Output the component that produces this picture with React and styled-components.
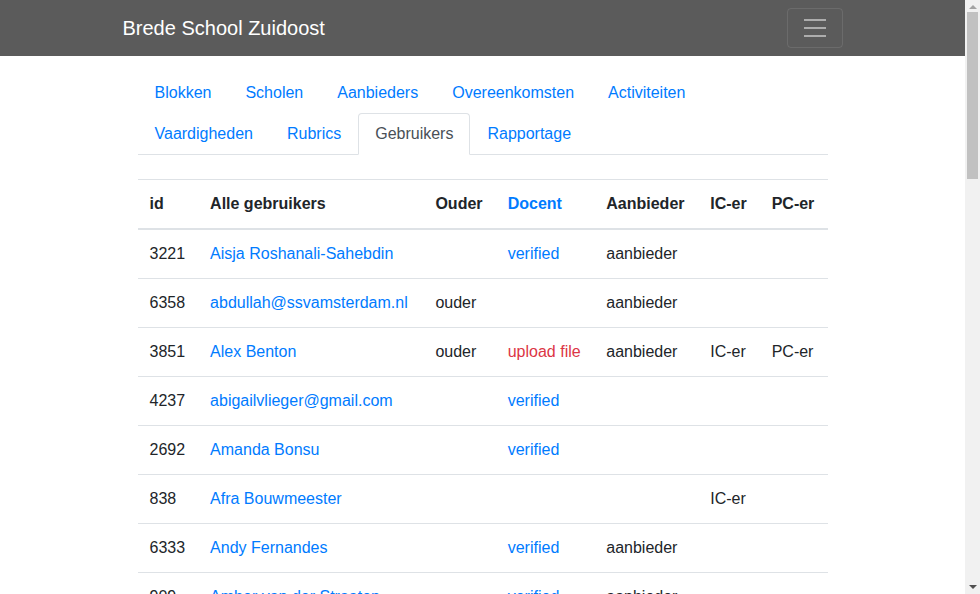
import styled, { createGlobalStyle } from "styled-components";

const GlobalStyle = createGlobalStyle`
  *, *::before, *::after { box-sizing: border-box; }
  body {
    margin: 0;
    font-family: "Liberation Sans", Arial, sans-serif;
    font-size: 16px;
    line-height: 1.5;
    color: #212529;
    background: #fff;
  }
`;

const tabs = [
  "Blokken",
  "Scholen",
  "Aanbieders",
  "Overeenkomsten",
  "Activiteiten",
  "Vaardigheden",
  "Rubrics",
  "Gebruikers",
  "Rapportage",
];

const users = [
  { id: 3221, name: "Aisja Roshanali-Sahebdin", docent: "verified", aanbieder: true },
  { id: 6358, name: "abdullah@ssvamsterdam.nl", ouder: true, aanbieder: true },
  { id: 3851, name: "Alex Benton", ouder: true, docent: "upload", aanbieder: true, ic: true, pc: true },
  { id: 4237, name: "abigailvlieger@gmail.com", docent: "verified" },
  { id: 2692, name: "Amanda Bonsu", docent: "verified" },
  { id: 838, name: "Afra Bouwmeester", ic: true },
  { id: 6333, name: "Andy Fernandes", docent: "verified", aanbieder: true },
  { id: 909, name: "Amber van der Straaten", docent: "verified", aanbieder: true },
  { id: 4410, name: "Anouk de Vries", ouder: true },
  { id: 5127, name: "Anton Kuipers", docent: "verified" },
  { id: 1284, name: "Ayoub El Amrani", docent: "verified", aanbieder: true },
  { id: 3902, name: "Babette Jansen", ouder: true },
];

export default function App() {
  return (
    <Viewport>
      <GlobalStyle />
      <Page>
        <Navbar>
          <NavContainer>
            <Brand href="#">Brede School Zuidoost</Brand>
            <Toggler aria-label="Toggle navigation">
              <TogglerIcon viewBox="0 0 30 30">
                <path
                  d="M4 7h22M4 15h22M4 23h22"
                  stroke="rgba(255,255,255,0.5)"
                  strokeWidth="2"
                  strokeMiterlimit="10"
                />
              </TogglerIcon>
            </Toggler>
          </NavContainer>
        </Navbar>

        <Container>
          <NavTabs>
            {tabs.map((t) => (
              <NavItem key={t}>
                <TabLink href="#" $active={t === "Gebruikers"}>
                  {t}
                </TabLink>
              </NavItem>
            ))}
          </NavTabs>

          <Table>
            <thead>
              <tr>
                <Th>id</Th>
                <Th>Alle gebruikers</Th>
                <Th>Ouder</Th>
                <Th $link>Docent</Th>
                <Th>Aanbieder</Th>
                <Th>IC-er</Th>
                <Th>PC-er</Th>
              </tr>
            </thead>
            <tbody>
              {users.map((u) => (
                <tr key={u.id}>
                  <Td>{u.id}</Td>
                  <Td>
                    <Link href="#">{u.name}</Link>
                  </Td>
                  <Td>{u.ouder ? "ouder" : ""}</Td>
                  <Td>
                    {u.docent === "verified" && <Link href="#">verified</Link>}
                    {u.docent === "upload" && (
                      <Link href="#" $danger>
                        upload file
                      </Link>
                    )}
                  </Td>
                  <Td>{u.aanbieder ? "aanbieder" : ""}</Td>
                  <Td>{u.ic ? "IC-er" : ""}</Td>
                  <Td>{u.pc ? "PC-er" : ""}</Td>
                </tr>
              ))}
            </tbody>
          </Table>
        </Container>
      </Page>

      <ScrollTrack aria-hidden="true">
        <Arrow $up />
        <Thumb />
        <TrackSpace />
        <Arrow />
      </ScrollTrack>
    </Viewport>
  );
}

/* === styles === */
const Viewport = styled.div`
  display: flex;
  height: 100vh;
  overflow: hidden;
`;

const Page = styled.div`
  flex: 1;
  min-width: 0;
  overflow: hidden;
`;

const ScrollTrack = styled.div`
  width: 15px;
  flex: none;
  background: #f1f1f1;
  display: flex;
  flex-direction: column;
  align-items: center;
`;

const Arrow = styled.div`
  width: 0;
  height: 0;
  margin: ${({ $up }) => ($up ? "5px 0 3px" : "3px 0 5px")};
  border-left: 4px solid transparent;
  border-right: 4px solid transparent;
  border-bottom: ${({ $up }) => ($up ? "4px solid #a3a3a3" : "none")};
  border-top: ${({ $up }) => ($up ? "none" : "4px solid #505050")};
`;

const Thumb = styled.div`
  width: 11px;
  height: 167px;
  background: #c1c1c1;
`;

const TrackSpace = styled.div`
  flex: 1;
`;

const Navbar = styled.nav`
  background: #5b5b5b;
  padding: 8px 16px;
`;

const NavContainer = styled.div`
  max-width: 720px;
  margin: 0 auto;
  display: flex;
  align-items: center;
  justify-content: space-between;
`;

const Brand = styled.a`
  color: #fff;
  font-size: 20px;
  line-height: 30px;
  padding: 5px 0;
  text-decoration: none;
`;

const Toggler = styled.button`
  width: 56px;
  height: 40px;
  padding: 4px 12px;
  background: transparent;
  border: 1px solid rgba(255, 255, 255, 0.1);
  border-radius: 4px;
  display: flex;
  align-items: center;
  justify-content: center;
`;

const TogglerIcon = styled.svg`
  width: 30px;
  height: 30px;
  display: block;
`;

const Container = styled.div`
  max-width: 720px;
  margin: 16px auto 0;
  padding: 0 15px;
`;

const NavTabs = styled.ul`
  list-style: none;
  margin: 0;
  padding: 0;
  display: flex;
  flex-wrap: wrap;
  border-bottom: 1px solid #dee2e6;
`;

const NavItem = styled.li`
  margin-bottom: -1px;
`;

const TabLink = styled.a`
  display: block;
  padding: 8px 16px;
  border: 1px solid transparent;
  border-top-left-radius: 4px;
  border-top-right-radius: 4px;
  text-decoration: none;
  color: ${({ $active }) => ($active ? "#495057" : "#007bff")};
  background: ${({ $active }) => ($active ? "#fff" : "transparent")};
  border-color: ${({ $active }) =>
    $active ? "#dee2e6 #dee2e6 #fff" : "transparent"};
`;

const Table = styled.table`
  width: 100%;
  margin-top: 24px;
  border-collapse: collapse;
  color: #212529;
`;

const Th = styled.th`
  padding: 12px;
  text-align: left;
  font-weight: 700;
  vertical-align: bottom;
  border-top: 1px solid #dee2e6;
  border-bottom: 2px solid #dee2e6;
  color: ${({ $link }) => ($link ? "#007bff" : "#212529")};
`;

const Td = styled.td`
  padding: 12px;
  vertical-align: top;
  border-top: 1px solid #dee2e6;
  white-space: nowrap;
`;

const Link = styled.a`
  color: ${({ $danger }) => ($danger ? "#dc3545" : "#007bff")};
  text-decoration: none;
`;
